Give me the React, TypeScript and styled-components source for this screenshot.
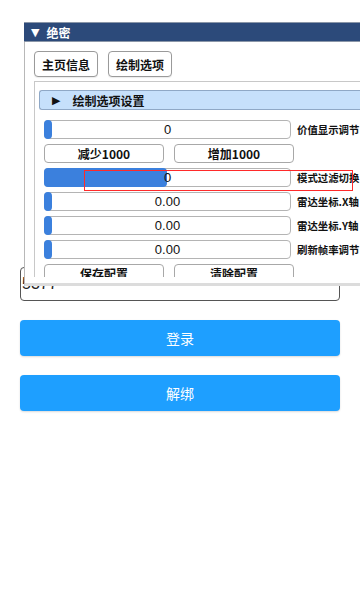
import React from "react";
import styled, { createGlobalStyle } from "styled-components";

const GlobalStyle = createGlobalStyle`
  html, body {
    margin: 0;
    padding: 0;
    background: #ffffff;
    overflow: hidden;
  }
  body {
    font-family: "Liberation Sans", "Noto Sans CJK SC", sans-serif;
  }
`;

const Page = styled.div`
  position: relative;
  width: 360px;
  height: 600px;
  overflow: hidden;
`;

const Form = styled.div`
  display: flex;
  flex-direction: column;
  padding: 267px 20px 0;
`;

const Field = styled.input`
  box-sizing: border-box;
  height: 34px;
  border: 1px solid #555;
  border-radius: 4px;
  padding: 0 1px;
  font-family: "Liberation Sans", sans-serif;
  font-size: 16px;
  color: #222;
  background: #fff;
  outline: none;
`;

const PrimaryButton = styled.button`
  margin-top: 19px;
  height: 36px;
  border: none;
  border-radius: 4px;
  background: #1e9fff;
  color: #ffffff;
  font-family: "Noto Sans CJK SC", sans-serif;
  font-size: 14px;
  box-shadow: 0 1px 2px rgba(0, 0, 0, 0.15);
`;

const Window = styled.div`
  position: absolute;
  top: 22px;
  left: 24px;
  width: 350px;
  display: flex;
  flex-direction: column;
`;

const TitleBar = styled.div`
  box-sizing: border-box;
  height: 20px;
  display: flex;
  align-items: center;
  gap: 7px;
  padding-left: 7px;
  background: #2c4a7a;
  border-top: 1px solid #8a96a8;
  border-bottom: 1px solid #8a96a8;
  color: #ffffff;
  font-family: "Noto Sans CJK SC", sans-serif;
  font-weight: 700;
  font-size: 12px;
`;

const Arrow = styled.span<{ $size: number }>`
  font-family: "DejaVu Sans", sans-serif;
  font-size: ${(p) => p.$size}px;
  line-height: 1;
`;

const Body = styled.div`
  box-sizing: border-box;
  height: 244px;
  padding: 9px 0 0 9px;
  background: #ffffff;
  border-left: 1px solid #b8b8b8;
  border-bottom: 3px solid #dcdcdc;
  overflow: hidden;
`;

const Tabs = styled.div`
  display: flex;
  gap: 10px;
`;

const TabButton = styled.button`
  box-sizing: border-box;
  width: 64px;
  height: 26px;
  padding: 0;
  border: 1px solid #9a9a9a;
  border-radius: 4px;
  background: #ffffff;
  color: #111;
  font-family: "Noto Sans CJK SC", sans-serif;
  font-weight: 700;
  font-size: 12px;
  box-shadow: 0 1px 1px rgba(0, 0, 0, 0.08);
`;

const Section = styled.div`
  box-sizing: border-box;
  margin-top: 4px;
  height: 196px;
  padding: 8px 0 0 4px;
  border-top: 1px solid #c8c8c8;
  border-left: 1px solid #c8c8c8;
  overflow: hidden;
`;

const SectionHeader = styled.div`
  box-sizing: border-box;
  height: 20px;
  display: flex;
  align-items: center;
  gap: 12px;
  padding-left: 12px;
  background: #c6e0fb;
  border: 1px solid #8fa8c6;
  border-right: none;
  border-radius: 3px 0 0 3px;
  color: #111;
  font-family: "Noto Sans CJK SC", sans-serif;
  font-weight: 700;
  font-size: 12px;
`;

const Rows = styled.div`
  display: flex;
  flex-direction: column;
  gap: 5px;
  padding: 10px 0 0 5px;
`;

const Row = styled.div`
  display: flex;
  align-items: center;
  gap: 6px;
`;

const ButtonRow = styled.div`
  display: flex;
  gap: 10px;
`;

const Slider = styled.div`
  position: relative;
  box-sizing: border-box;
  width: 247px;
  height: 19px;
  border: 1px solid #b4b4b4;
  border-radius: 4px;
  background: #ffffff;
  display: flex;
  align-items: center;
  justify-content: center;
`;

const Fill = styled.div`
  position: absolute;
  left: -1px;
  top: -1px;
  bottom: -1px;
  min-width: 8px;
  border-radius: 4px;
  background: #3b80dd;
`;

const SliderValue = styled.span`
  position: relative;
  font-family: "Liberation Sans", sans-serif;
  font-size: 13px;
  color: #111;
`;

const Label = styled.span`
  font-family: "Noto Sans CJK SC", sans-serif;
  font-weight: 700;
  font-size: 10.4px;
  color: #111;
  white-space: nowrap;
`;

const ActionButton = styled.button`
  box-sizing: border-box;
  width: 120px;
  height: 19px;
  padding: 0;
  border: 1px solid #a8a8a8;
  border-radius: 4px;
  background: #ffffff;
  color: #111;
  font-family: "Noto Sans CJK SC", sans-serif;
  font-weight: 700;
  font-size: 12px;
  line-height: 1;
`;

const Highlight = styled.div`
  position: absolute;
  top: 170px;
  left: 84px;
  width: 269px;
  height: 21px;
  box-sizing: border-box;
  border: 1.5px solid #ff2a2a;
  pointer-events: none;
`;

interface SliderRow {
  label: string;
  value: string;
  ratio: number;
}

const topSlider: SliderRow = { label: "价值显示调节", value: "0", ratio: 0 };

const sliders: SliderRow[] = [
  { label: "模式过滤切换", value: "0", ratio: 0.5 },
  { label: "雷达坐标.X轴", value: "0.00", ratio: 0 },
  { label: "雷达坐标.Y轴", value: "0.00", ratio: 0 },
  { label: "刷新帧率调节", value: "0.00", ratio: 0 },
];

function SliderLine({ row }: { row: SliderRow }) {
  return (
    <Row>
      <Slider>
        <Fill style={{ width: `${row.ratio * 100}%` }} />
        <SliderValue>{row.value}</SliderValue>
      </Slider>
      <Label>{row.label}</Label>
    </Row>
  );
}

export default function App() {
  return (
    <Page>
      <GlobalStyle />
      <Form>
        <Field readOnly value="5377" />
        <PrimaryButton>登录</PrimaryButton>
        <PrimaryButton>解绑</PrimaryButton>
      </Form>

      <Window>
        <TitleBar>
          <Arrow $size={11}>▼</Arrow>
          绝密
        </TitleBar>
        <Body>
          <Tabs>
            <TabButton>主页信息</TabButton>
            <TabButton>绘制选项</TabButton>
          </Tabs>
          <Section>
            <SectionHeader>
              <Arrow $size={11}>▶</Arrow>
              绘制选项设置
            </SectionHeader>
            <Rows>
              <SliderLine row={topSlider} />
              <ButtonRow>
                <ActionButton>减少1000</ActionButton>
                <ActionButton>增加1000</ActionButton>
              </ButtonRow>
              {sliders.map((row) => (
                <SliderLine key={row.label} row={row} />
              ))}
              <ButtonRow>
                <ActionButton>保存配置</ActionButton>
                <ActionButton>清除配置</ActionButton>
              </ButtonRow>
            </Rows>
          </Section>
        </Body>
      </Window>

      <Highlight />
    </Page>
  );
}
